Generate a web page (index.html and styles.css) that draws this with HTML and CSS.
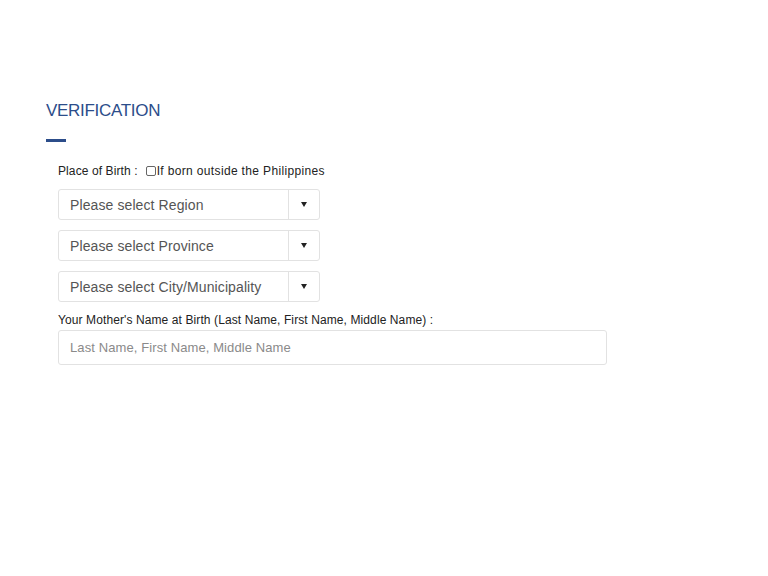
FILE: index.html
```html
<!DOCTYPE html>
<html>
<head>
<meta charset="utf-8">
<link rel="stylesheet" href="styles.css">
</head>
<body>
<div class="page">
  <h2 class="title">VERIFICATION</h2>
  <div class="bar"></div>
  <div class="form">
    <div class="label-row">
      <span>Place of Birth :</span>
      <label class="check"><span class="box"></span>If born outside the Philippines</label>
    </div>
    <div class="select"><span class="sel-text">Please select Region</span><span class="arrow"><span class="tri"></span></span></div>
    <div class="select"><span class="sel-text">Please select Province</span><span class="arrow"><span class="tri"></span></span></div>
    <div class="select"><span class="sel-text">Please select City/Municipality</span><span class="arrow"><span class="tri"></span></span></div>
    <div class="label">Your Mother's Name at Birth (Last Name, First Name, Middle Name) :</div>
    <div class="input">Last Name, First Name, Middle Name</div>
  </div>
</div>
</body>
</html>
```
FILE: styles.css
```css
html, body { margin: 0; padding: 0; background: #fff; }
body { font-family: "Liberation Sans", Arial, sans-serif; }
.page { padding: 101px 0 0 46px; }
.title {
  margin: 0;
  font-size: 17px;
  font-weight: normal;
  letter-spacing: -0.3px;
  color: #2c4d8a;
  line-height: 20px;
}
.bar { width: 20px; height: 3px; background: #2c4d8a; margin-top: 18px; }
.form { padding-left: 12px; margin-top: 22px; width: 549px; }
.label-row { display: flex; align-items: center; font-size: 12px; color: #222; height: 14px; gap: 8px; letter-spacing: 0.1px; }
.check { display: flex; align-items: center; letter-spacing: 0.35px; }
.box { width: 10px; height: 10px; border: 1px solid #666; border-radius: 2px; display: inline-block; margin-right: 1px; box-sizing: border-box; }
.select {
  border: 1px solid #e2e2e2; border-radius: 3px;
  display: flex; align-items: center;
  margin-top: 10px; box-sizing: border-box; height: 31px; width: 262px;
}
.label-row + .select { margin-top: 11px; }
.sel-text { flex: 1; padding-left: 11px; font-size: 14px; color: #555; letter-spacing: 0.1px; }
.arrow { width: 30px; height: 100%; border-left: 1px solid #e2e2e2; display: flex; align-items: center; justify-content: center; }
.tri { width: 0; height: 0; border-left: 3px solid transparent; border-right: 3px solid transparent; border-top: 5px solid #222; }
.label { font-size: 12px; color: #222; margin-top: 11px; line-height: 14px; letter-spacing: 0.1px; }
.input {
  margin-top: 3px; height: 35px; box-sizing: border-box;
  border: 1px solid #e2e2e2; border-radius: 3px;
  display: flex; align-items: center; padding-left: 11px;
  font-size: 13px; color: #8a8a8a; letter-spacing: 0.1px;
}
```
